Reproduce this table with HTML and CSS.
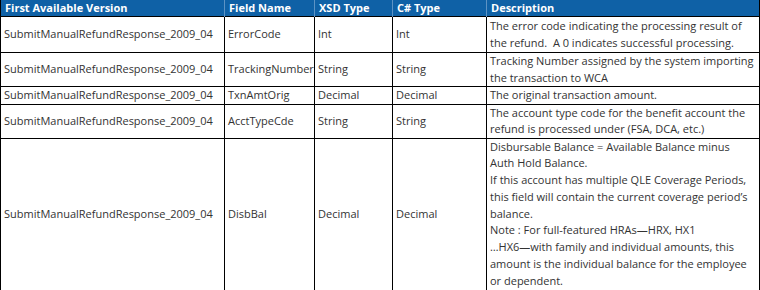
FILE: index.html
```html
<!DOCTYPE html>
<html>
<head>
<meta charset="utf-8">
<link rel="stylesheet" href="styles.css">
</head>
<body>
<table class="spec">
  <colgroup>
    <col class="c1"><col class="c2"><col class="c3"><col class="c4"><col class="c5">
  </colgroup>
  <thead>
    <tr>
      <th>First Available Version</th>
      <th>Field Name</th>
      <th>XSD Type</th>
      <th>C# Type</th>
      <th>Description</th>
    </tr>
  </thead>
  <tbody>
    <tr class="r1">
      <td>SubmitManualRefundResponse_2009_04</td>
      <td>ErrorCode</td>
      <td>Int</td>
      <td>Int</td>
      <td>The error code indicating the processing result of the refund.&nbsp; A 0 indicates successful processing.</td>
    </tr>
    <tr>
      <td>SubmitManualRefundResponse_2009_04</td>
      <td>TrackingNumber</td>
      <td>String</td>
      <td>String</td>
      <td>Tracking Number assigned by the system importing the transaction to WCA</td>
    </tr>
    <tr>
      <td>SubmitManualRefundResponse_2009_04</td>
      <td>TxnAmtOrig</td>
      <td>Decimal</td>
      <td>Decimal</td>
      <td>The original transaction amount.</td>
    </tr>
    <tr>
      <td>SubmitManualRefundResponse_2009_04</td>
      <td>AcctTypeCde</td>
      <td>String</td>
      <td>String</td>
      <td>The account type code for the benefit account the refund is processed under (FSA, DCA, etc.)</td>
    </tr>
    <tr class="r5">
      <td>SubmitManualRefundResponse_2009_04</td>
      <td>DisbBal</td>
      <td>Decimal</td>
      <td>Decimal</td>
      <td>Disbursable Balance = Available Balance minus Auth Hold Balance.<br>If this account has multiple QLE Coverage Periods, this field will contain the current coverage period’s balance.<br>Note : For full-featured HRAs—HRX, HX1<br>…HX6—with family and individual amounts, this amount is the individual balance for the employee or dependent.</td>
    </tr>
  </tbody>
</table>
</body>
</html>
```
FILE: styles.css
```css
html, body {
  margin: 0;
  padding: 0;
  background: #ffffff;
}
.spec {
  border-collapse: collapse;
  width: 759px;
  table-layout: fixed;
  font-family: "Open Sans", sans-serif;
  font-size: 11px;
  color: #333333;
}
.c1 { width: 224px; }
.c2 { width: 90px; }
.c3 { width: 78px; }
.c4 { width: 94px; }
.c5 { width: 273px; }
.spec th {
  background: #0f61a6;
  color: #ffffff;
  font-weight: bold;
  text-align: left;
  height: 16px;
  padding: 0 4px;
  line-height: 16px;
  border-left: 1px solid #5d93c4;
}
.spec th:first-child { border-left: 1px solid #000; }
.spec th:last-child { border-right: 1px solid #000; }
.spec td {
  border: 1px solid #000;
  padding: 0 3px;
  line-height: 16.5px;
  vertical-align: middle;
}
.r1 td {
  padding-top: 1px;
  padding-bottom: 1px;
}
.r5 td {
  line-height: 16.8px;
}
```
